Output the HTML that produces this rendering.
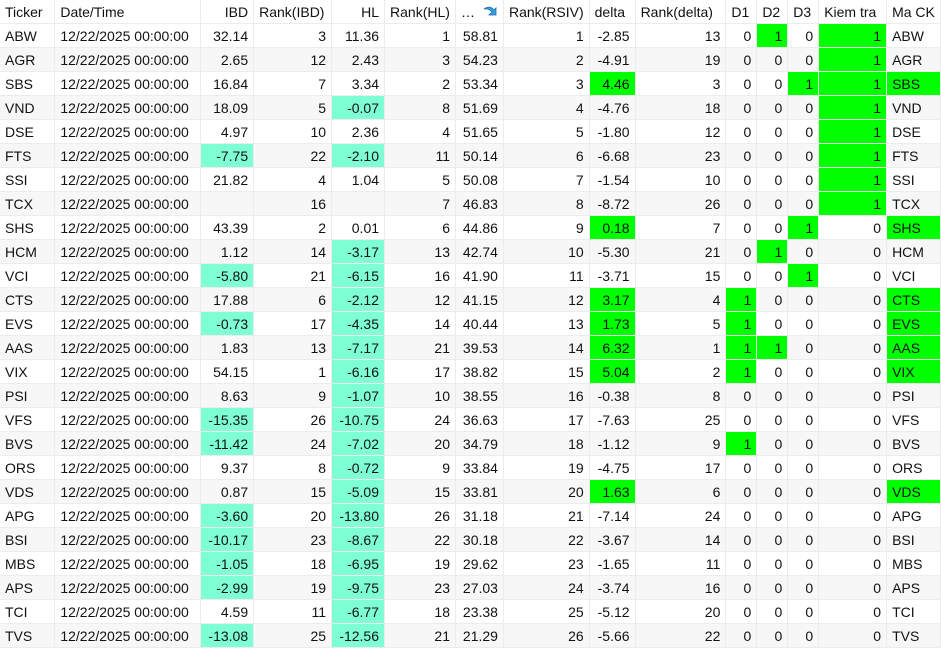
<!DOCTYPE html>
<html><head><meta charset="utf-8"><style>
body{margin:0;background:#fff;font-family:"Liberation Sans",sans-serif;font-size:14px;color:#111;width:941px;height:651px;overflow:hidden}
table{border-collapse:collapse;table-layout:fixed;position:absolute;left:0;top:0}
td,th{height:23px;padding:0 5px;border-right:1px solid #ececec;border-bottom:1px solid #ececec;white-space:nowrap;overflow:hidden;font-weight:normal}
th{text-align:left}
td{text-align:right}
td.l{text-align:left}
th.r{text-align:right}
tr:nth-child(even) td{background:#f7f7f7}
tr td.g{background:#00ff00}
tr td.a{background:#7fffd4}
</style></head><body>
<table id="t">
<colgroup><col style="width:55px"><col style="width:146px"><col style="width:53px"><col style="width:78px"><col style="width:53px"><col style="width:71px"><col style="width:48px"><col style="width:84px"><col style="width:46px"><col style="width:91px"><col style="width:31px"><col style="width:31px"><col style="width:31px"><col style="width:68px"><col style="width:50px"></colgroup>
<thead><tr><th>Ticker</th><th>Date/Time</th><th class="r">IBD</th><th>Rank(IBD)</th><th class="r">HL</th><th>Rank(HL)</th><th style="position:relative">…<svg style="position:absolute;left:26px;top:4px" width="16" height="16" viewBox="0 0 16 16"><path d="M2 5 Q8 1 12 6 L14 4 L14 11 L7 11 L10 8 Q7 4 2 5Z" fill="#3aa0e0" stroke="#1c6fb0" stroke-width="0.8"/></svg></th><th>Rank(RSIV)</th><th>delta</th><th>Rank(delta)</th><th>D1</th><th>D2</th><th>D3</th><th>Kiem tra</th><th>Ma CK</th></tr></thead>
<tbody id="b"></tbody></table>
<script>
var d=`ABW 32.14 3 11.36 1 58.81 1 -2.85 13 0 1 0 1
AGR 2.65 12 2.43 3 54.23 2 -4.91 19 0 0 0 1
SBS 16.84 7 3.34 2 53.34 3 4.46 3 0 0 1 1
VND 18.09 5 -0.07 8 51.69 4 -4.76 18 0 0 0 1
DSE 4.97 10 2.36 4 51.65 5 -1.80 12 0 0 0 1
FTS -7.75 22 -2.10 11 50.14 6 -6.68 23 0 0 0 1
SSI 21.82 4 1.04 5 50.08 7 -1.54 10 0 0 0 1
TCX _ 16 _ 7 46.83 8 -8.72 26 0 0 0 1
SHS 43.39 2 0.01 6 44.86 9 0.18 7 0 0 1 0
HCM 1.12 14 -3.17 13 42.74 10 -5.30 21 0 1 0 0
VCI -5.80 21 -6.15 16 41.90 11 -3.71 15 0 0 1 0
CTS 17.88 6 -2.12 12 41.15 12 3.17 4 1 0 0 0
EVS -0.73 17 -4.35 14 40.44 13 1.73 5 1 0 0 0
AAS 1.83 13 -7.17 21 39.53 14 6.32 1 1 1 0 0
VIX 54.15 1 -6.16 17 38.82 15 5.04 2 1 0 0 0
PSI 8.63 9 -1.07 10 38.55 16 -0.38 8 0 0 0 0
VFS -15.35 26 -10.75 24 36.63 17 -7.63 25 0 0 0 0
BVS -11.42 24 -7.02 20 34.79 18 -1.12 9 1 0 0 0
ORS 9.37 8 -0.72 9 33.84 19 -4.75 17 0 0 0 0
VDS 0.87 15 -5.09 15 33.81 20 1.63 6 0 0 0 0
APG -3.60 20 -13.80 26 31.18 21 -7.14 24 0 0 0 0
BSI -10.17 23 -8.67 22 30.18 22 -3.67 14 0 0 0 0
MBS -1.05 18 -6.95 19 29.62 23 -1.65 11 0 0 0 0
APS -2.99 19 -9.75 23 27.03 24 -3.74 16 0 0 0 0
TCI 4.59 11 -6.77 18 23.38 25 -5.12 20 0 0 0 0
TVS -13.08 25 -12.56 21 21.29 26 -5.66 22 0 0 0 0`;
var h='';
d.split('\n').forEach(function(line){
var v=line.trim().split(' ');
function n(x){return x=='_'?'':x}
var pos=parseFloat(v[7])>0;
h+='<tr><td class="l">'+v[0]+'</td><td class="l">12/22/2025 00:00:00</td>'+
'<td'+(v[1]!='_'&&parseFloat(v[1])<0?' class="a"':'')+'>'+n(v[1])+'</td>'+
'<td>'+v[2]+'</td>'+
'<td'+(v[3]!='_'&&parseFloat(v[3])<0?' class="a"':'')+'>'+n(v[3])+'</td>'+
'<td>'+v[4]+'</td><td>'+v[5]+'</td><td>'+v[6]+'</td>'+
'<td'+(pos?' class="g"':'')+'>'+v[7]+'</td><td>'+v[8]+'</td>'+
'<td'+(v[9]=='1'?' class="g"':'')+'>'+v[9]+'</td>'+
'<td'+(v[10]=='1'?' class="g"':'')+'>'+v[10]+'</td>'+
'<td'+(v[11]=='1'?' class="g"':'')+'>'+v[11]+'</td>'+
'<td'+(v[12]=='1'?' class="g"':'')+'>'+v[12]+'</td>'+
'<td class="l'+(pos?' g':'')+'">'+v[0]+'</td></tr>';
});
document.getElementById('b').innerHTML=h;
</script>
</body></html>
